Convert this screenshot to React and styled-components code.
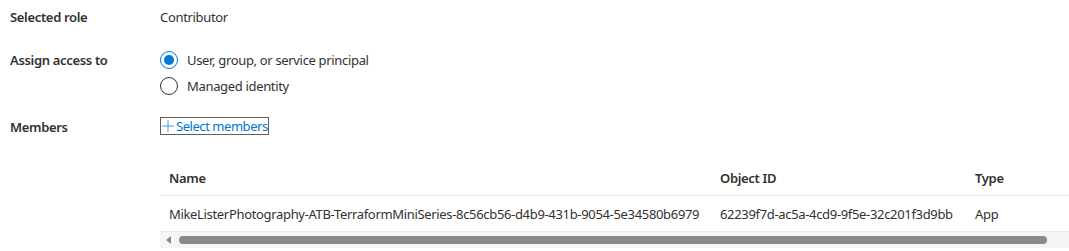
import styled, { createGlobalStyle } from 'styled-components'

const GlobalStyle = createGlobalStyle`
  body {
    margin: 0;
    background: #fff;
    font-family: "Segoe UI", "Noto Sans", "Open Sans", sans-serif;
    font-size: 13px;
    letter-spacing: -0.33px;
    color: #323130;
  }
`

const Page = styled.div`
  padding: 7px 0 0 10px;
  width: 1059px;
  overflow: hidden;
`

const FieldRow = styled.div`
  display: grid;
  grid-template-columns: 150px 1fr;
  align-items: start;
  margin-bottom: ${p => p.gap || 0}px;
`

const Label = styled.div`
  font-weight: 600;
  line-height: 20px;
`

const Value = styled.div`
  line-height: 20px;
`

const RadioList = styled.div`
  display: flex;
  flex-direction: column;
  gap: 6px;
`

const RadioItem = styled.label`
  display: flex;
  align-items: center;
  gap: 9px;
  line-height: 20px;
`

const RadioCircle = styled.span`
  width: 18px;
  height: 18px;
  box-sizing: border-box;
  border-radius: 50%;
  border: 1px solid ${p => (p.checked ? '#0078d4' : '#323130')};
  display: flex;
  align-items: center;
  justify-content: center;
  &::after {
    content: '';
    display: ${p => (p.checked ? 'block' : 'none')};
    width: 10px;
    height: 10px;
    border-radius: 50%;
    background: #0078d4;
  }
`

const LinkButton = styled.button`
  display: inline-flex;
  align-items: center;
  gap: 1px;
  padding: 0;
  height: 18px;
  border: 1px solid #605e5c;
  background: none;
  font: inherit;
  letter-spacing: -0.45px;
  color: #0078d4;
  line-height: 16px;
  cursor: pointer;
`

const TableWrap = styled.div`
  margin-left: 150px;
  margin-top: 23px;
  width: 909px;
`

const Table = styled.div`
  display: grid;
  grid-template-columns: 551px 255px 150px;
`

const Cell = styled.div`
  height: 35px;
  display: flex;
  align-items: center;
  padding-left: 9px;
  white-space: nowrap;
  border-bottom: 1px solid #edebe9;
  font-weight: ${p => (p.head ? 600 : 400)};
`

const ScrollTrack = styled.div`
  height: 16px;
  background: #f5f5f5;
  display: flex;
  align-items: center;
  gap: 8px;
  padding-left: 6px;
`

const Arrow = styled.span`
  width: 0;
  height: 0;
  border-top: 4px solid transparent;
  border-bottom: 4px solid transparent;
  border-right: 5px solid #8a8a8a;
`

const Thumb = styled.div`
  width: 868px;
  height: 8px;
  border-radius: 4px;
  background: #8a8a8a;
`

const Plus = () => (
  <svg width="14" height="14" viewBox="0 0 14 14" fill="none" stroke="#4a9ee0" strokeWidth="1">
    <path d="M7 1v12M1 7h12" />
  </svg>
)

export default function App() {
  return (
    <>
      <GlobalStyle />
      <Page>
        <FieldRow gap={23}>
          <Label>Selected role</Label>
          <Value>Contributor</Value>
        </FieldRow>
        <FieldRow gap={21}>
          <Label>Assign access to</Label>
          <RadioList>
            <RadioItem>
              <RadioCircle checked />
              User, group, or service principal
            </RadioItem>
            <RadioItem>
              <RadioCircle />
              Managed identity
            </RadioItem>
          </RadioList>
        </FieldRow>
        <FieldRow>
          <Label>Members</Label>
          <div>
            <LinkButton>
              <Plus />
              Select members
            </LinkButton>
          </div>
        </FieldRow>
        <TableWrap>
          <Table>
            <Cell head>Name</Cell>
            <Cell head>Object ID</Cell>
            <Cell head>Type</Cell>
            <Cell>MikeListerPhotography-ATB-TerraformMiniSeries-8c56cb56-d4b9-431b-9054-5e34580b6979</Cell>
            <Cell>62239f7d-ac5a-4cd9-9f5e-32c201f3d9bb</Cell>
            <Cell>App</Cell>
          </Table>
          <ScrollTrack>
            <Arrow />
            <Thumb />
          </ScrollTrack>
        </TableWrap>
      </Page>
    </>
  )
}
